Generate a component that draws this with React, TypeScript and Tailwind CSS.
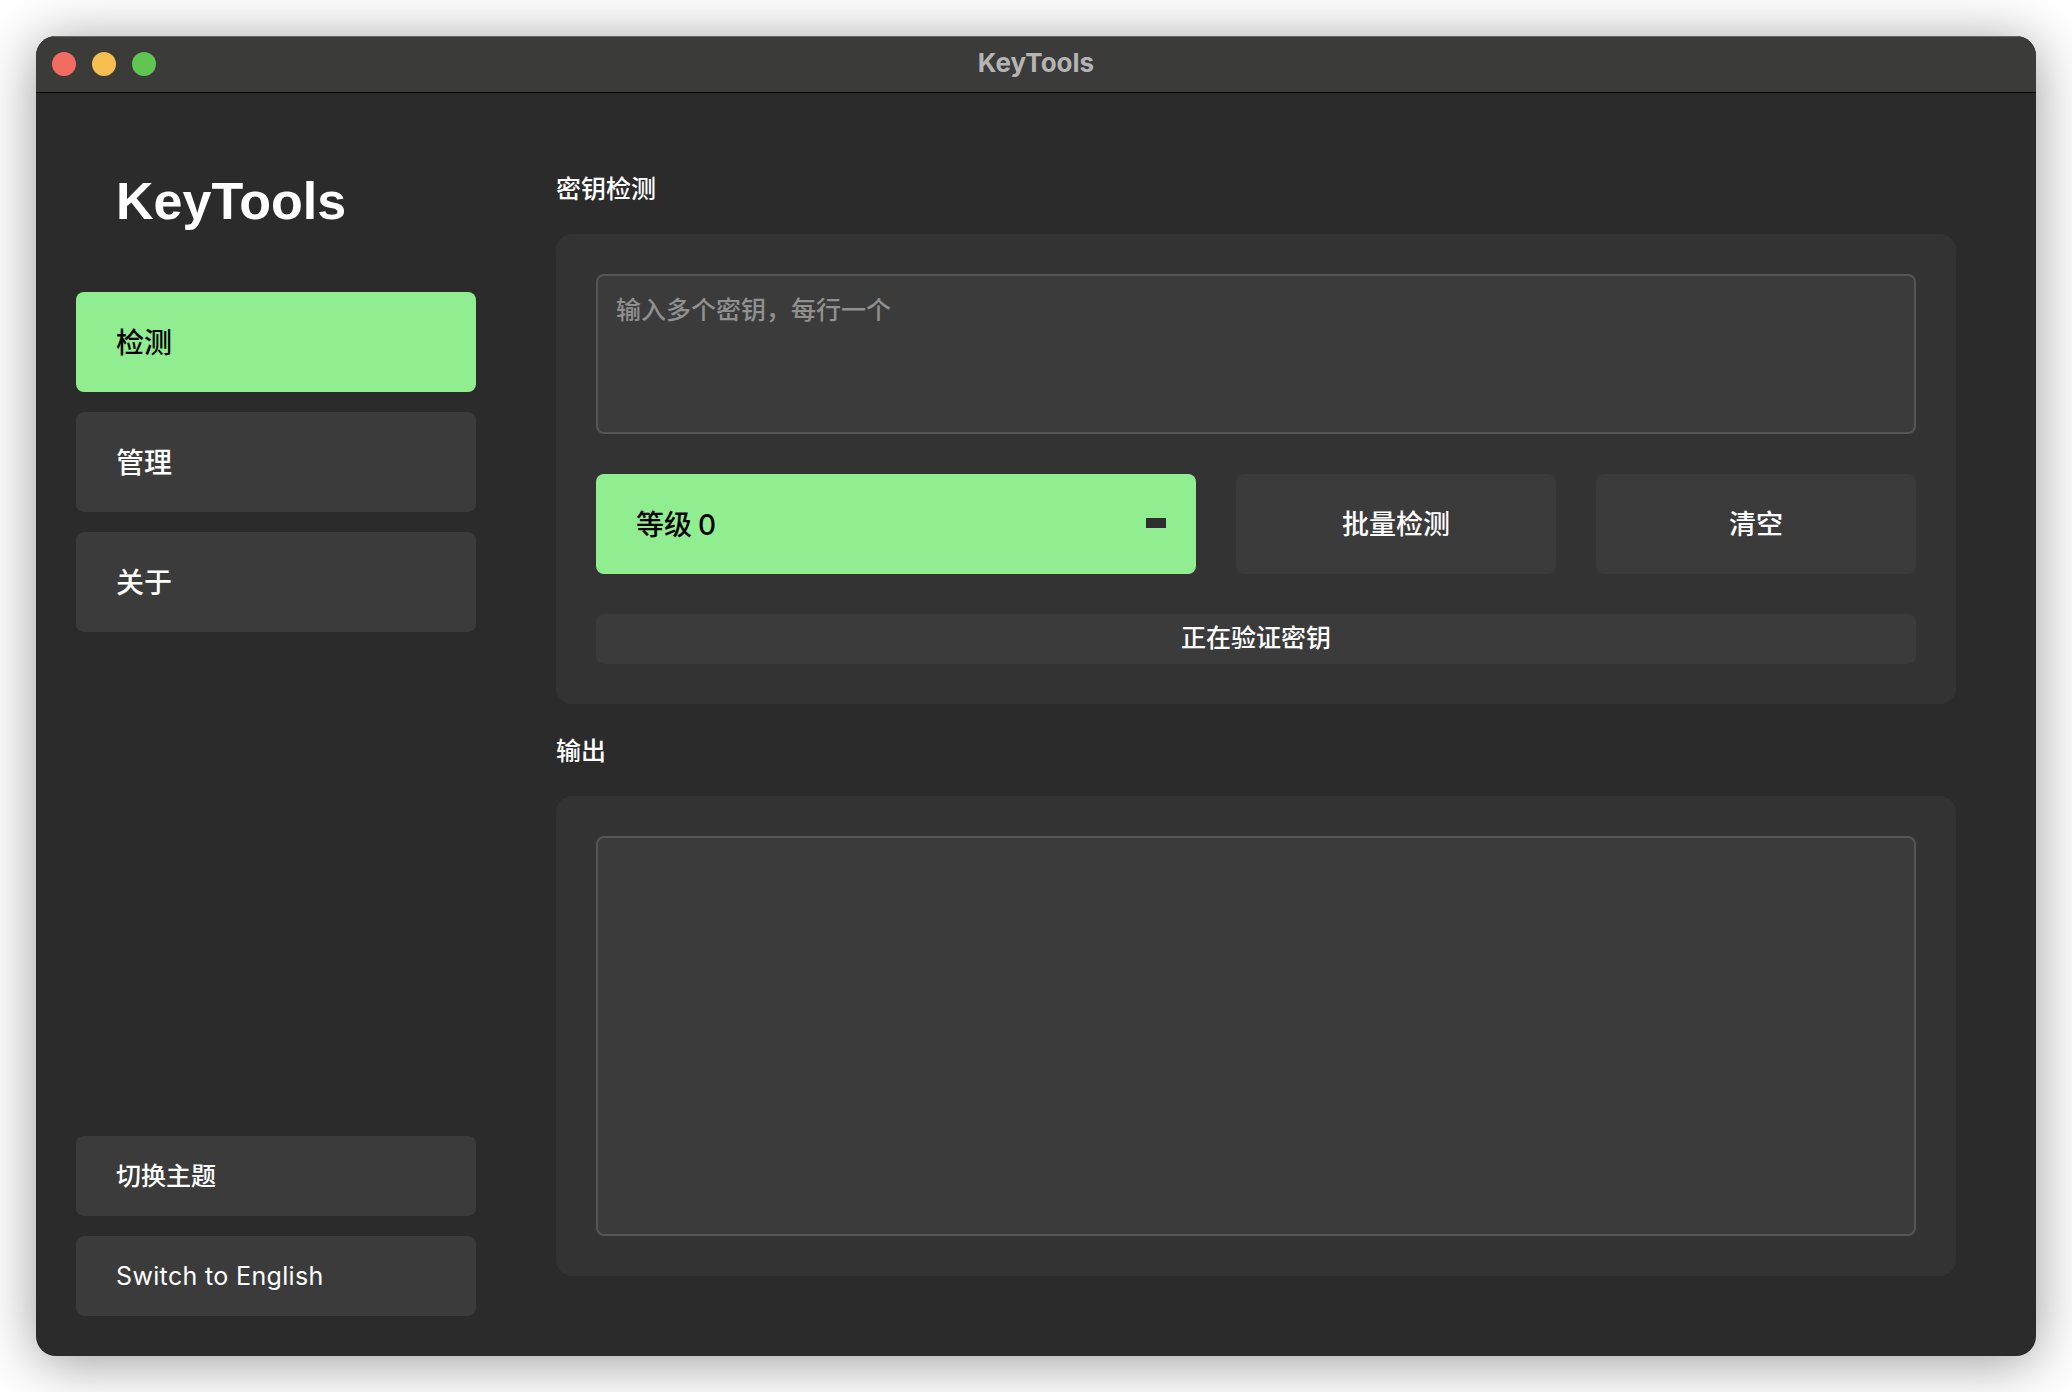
const CJK = "font-['Inter','Noto_Sans_CJK_SC',sans-serif]";

function NavButton({ label, active }: { label: string; active?: boolean }) {
  return (
    <button
      type="button"
      className={
        active
          ? "flex h-[100px] w-full items-center rounded-lg bg-[#90ee90] pl-10 pt-[1px] text-[28px] font-medium text-black"
          : "flex h-[100px] w-full items-center rounded-lg bg-[#3b3b3b] pl-10 pt-[1px] text-[28px] font-medium text-white"
      }
    >
      {label}
    </button>
  );
}

function Sidebar() {
  return (
    <aside className="flex w-[400px] shrink-0 flex-col pb-10">
      <h1 className="flex h-[199px] items-center pl-10 pt-4 font-['Liberation_Sans',sans-serif] text-[52px] font-bold text-white">
        KeyTools
      </h1>
      <nav className="flex flex-col gap-5">
        <NavButton label="检测" active />
        <NavButton label="管理" />
        <NavButton label="关于" />
      </nav>
      <div className="mt-auto flex flex-col gap-5">
        <button
          type="button"
          className="flex h-20 w-full items-center rounded-lg bg-[#3b3b3b] pl-10 pt-[2px] text-[25px] font-medium text-white"
        >
          切换主题
        </button>
        <button
          type="button"
          className="flex h-20 w-full items-center rounded-lg bg-[#3b3b3b] pl-10 pt-[2px] text-[25px] font-normal tracking-[0.35px] text-white"
        >
          Switch to English
        </button>
      </div>
    </aside>
  );
}

function SectionLabel({ label }: { label: string }) {
  return <h2 className="mb-[26px] flex h-9 items-center text-[25px] font-medium text-white">{label}</h2>;
}

function DetectCard() {
  return (
    <section className="flex flex-col gap-10 rounded-2xl bg-[#333333] p-10">
      <textarea
        placeholder="输入多个密钥，每行一个"
        className="h-40 w-full resize-none rounded-lg border-2 border-[#555555] bg-[#3b3b3b] px-[18px] py-[16px] text-[25px] font-medium leading-9 text-white outline-none placeholder:text-[#909090]"
      />
      <div className="grid grid-cols-[600px_1fr_1fr] gap-10">
        <div className="flex h-[100px] items-center justify-between rounded-lg bg-[#90ee90] pl-10 pr-[30px] text-[28px] font-medium text-black">
          <span className="pt-[2px] [word-spacing:-1.5px]">等级 0</span>
          <span className="mb-0.5 h-2.5 w-5 bg-[#2f2f2f]" />
        </div>
        <button type="button" className="h-[100px] rounded-lg bg-[#3b3b3b] pt-[2px] text-[27px] font-medium text-white">
          批量检测
        </button>
        <button type="button" className="h-[100px] rounded-lg bg-[#3b3b3b] pt-[2px] text-[27px] font-medium text-white">
          清空
        </button>
      </div>
      <div className="flex h-[50px] items-center justify-center rounded-lg bg-[#3b3b3b] text-[25px] font-medium text-white">
        正在验证密钥
      </div>
    </section>
  );
}

function OutputCard() {
  return (
    <section className="rounded-2xl bg-[#333333] p-10">
      <textarea
        readOnly
        className="block h-[400px] w-full resize-none rounded-lg border-2 border-[#555555] bg-[#3b3b3b] outline-none"
      />
    </section>
  );
}

export default function App() {
  return (
    <div className={`h-[1392px] w-[2072px] overflow-hidden bg-white p-9 ${CJK}`}>
      <div className="flex h-[1320px] w-[2000px] flex-col overflow-hidden rounded-[20px] bg-[#2b2b2b] shadow-[0_6px_56px_rgba(0,0,0,0.4)]">
        <header className="grid h-[57px] shrink-0 grid-cols-[1fr_auto_1fr] items-center border-b border-black bg-[#3b3b39] px-4 shadow-[inset_0_1px_0_#666666]">
          <div className="flex gap-4">
            <span className="size-6 rounded-full bg-[#f26d60]" />
            <span className="size-6 rounded-full bg-[#f6bf4f]" />
            <span className="size-6 rounded-full bg-[#61c554]" />
          </div>
          <span className="pb-[3px] text-[26px] font-bold text-[#b4b4b4]">KeyTools</span>
          <span />
        </header>
        <div className="flex min-h-0 flex-1 pl-10 pr-20">
          <Sidebar />
          <main className="ml-20 flex-1 pt-[79px]">
            <SectionLabel label="密钥检测" />
            <DetectCard />
            <div className="mt-[30px]">
              <SectionLabel label="输出" />
              <OutputCard />
            </div>
          </main>
        </div>
      </div>
    </div>
  );
}
